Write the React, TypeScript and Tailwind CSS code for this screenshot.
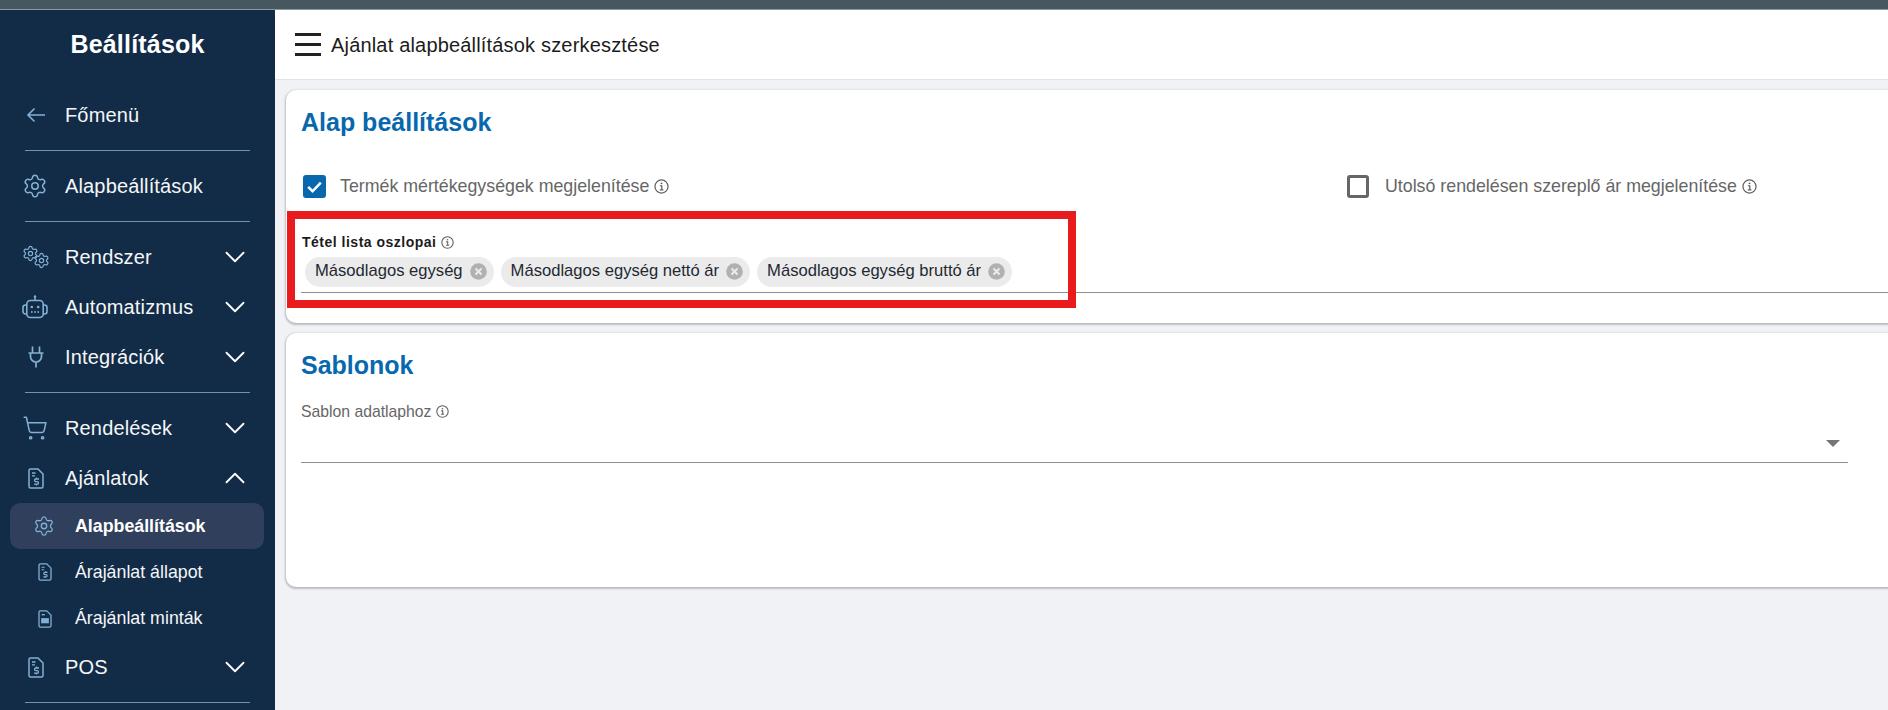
import { Settings, ShoppingCart, ChevronDown, ChevronUp } from 'lucide-react'
import type { ReactNode } from 'react'

function BackArrow() {
  return (
    <svg width={20} height={16} viewBox="0 0 20 16" fill="none" stroke="currentColor" strokeWidth="1.600">
      <path d="M19 8H2M8.500 1.500L2 8l6.500 6.500" />
    </svg>
  )
}

function QuoteIcon({ small }: { small?: boolean }) {
  return (
    <svg width={small ? 14 : 16} height={small ? 18 : 21} viewBox="0 0 16 21" fill="none" stroke="currentColor" strokeWidth="1.500">
      <path d="M2.500 1h7.500l5 5v12.500a1.500 1.500 0 0 1-1.500 1.500h-11A1.500 1.500 0 0 1 1 18.500V2.500A1.500 1.500 0 0 1 2.500 1z" />
      <path d="M4 5h3.500M4 7.800h3" strokeWidth="1.300" />
      <path d="M11 11h-3.200a1.200 1.200 0 0 0 0 2.600h1.400a1.200 1.200 0 0 1 0 2.600H6M8.500 9.600V11M8.500 16.200v1.400" strokeWidth="1.300" />
    </svg>
  )
}

function TemplateIcon() {
  return (
    <svg width={14} height={18} viewBox="0 0 16 21" fill="none" stroke="currentColor" strokeWidth="1.500">
      <path d="M2.500 1h7.500l5 5v12.500a1.500 1.500 0 0 1-1.500 1.500h-11A1.500 1.500 0 0 1 1 18.500V2.500A1.500 1.500 0 0 1 2.500 1z" />
      <path d="M4 5.500h4" strokeWidth="1.500" />
      <rect x="3.500" y="9.500" width="9" height="6" fill="currentColor" stroke="none" />
    </svg>
  )
}

function GearsIcon() {
  return (
    <span className="relative block h-[24px] w-[28px]">
      <Settings size={17} strokeWidth={1.700} className="absolute left-0 top-0" />
      <Settings size={17} strokeWidth={1.700} className="absolute bottom-0 right-0" />
    </span>
  )
}

function BotIcon() {
  return (
    <svg width={26} height={24} viewBox="0 0 26 24" fill="none" stroke="currentColor" strokeWidth="1.600">
      <path d="M13 1v4.500" />
      <circle cx="13" cy="1.500" r="1.200" fill="currentColor" stroke="none" />
      <rect x="4.800" y="5.500" width="16.400" height="17" rx="3.500" />
      <path d="M4.800 10H3.500A2.500 2.500 0 0 0 1 12.500v4A2.500 2.500 0 0 0 3.500 19h1.300M21.200 10h1.300a2.500 2.500 0 0 1 2.500 2.500v4a2.500 2.500 0 0 1-2.500 2.500h-1.300" />
      <circle cx="9.800" cy="12" r="1.300" fill="currentColor" stroke="none" />
      <circle cx="16.200" cy="12" r="1.300" fill="currentColor" stroke="none" />
      <circle cx="9.800" cy="17" r="0.900" fill="currentColor" stroke="none" />
      <circle cx="13" cy="17" r="0.900" fill="currentColor" stroke="none" />
      <circle cx="16.200" cy="17" r="0.900" fill="currentColor" stroke="none" />
    </svg>
  )
}

function PlugIcon() {
  return (
    <svg width={16} height={22} viewBox="0 0 16 22" fill="none" stroke="currentColor" strokeWidth="1.700">
      <path d="M4.500 0.500V7M11.500 0.500V7M0.500 7h15M2.500 7v3.500a5.500 5.500 0 0 0 11 0V7M8 16v5.500" />
    </svg>
  )
}

function InfoIcon({ size = 13 }: { size?: number }) {
  return (
    <svg width={size} height={size} viewBox="0 0 16 16" fill="none" stroke="#5f5f5f" className="shrink-0">
      <circle cx="8" cy="8" r="7" strokeWidth="1.300" />
      <path d="M6.300 7.200H8.300V11.500M6.200 11.500H10" strokeWidth="1.300" />
      <circle cx="8" cy="4.600" r="1" fill="#5f5f5f" stroke="none" />
    </svg>
  )
}

function Divider() {
  return <div className="mx-[25px] my-[10px] h-px bg-[#6f94b3]" />
}

function NavItem({ icon, label, open }: { icon: ReactNode; label: string; open?: boolean }) {
  return (
    <div className="flex h-[50px] items-center pl-[22px] pr-[23px] text-[20px] tracking-[0.15px] text-[#f4f6f8]">
      <span className="flex w-[43px] shrink-0 items-center text-[#82b1d4]">{icon}</span>
      <span className="flex-1">{label}</span>
      {open === undefined ? null : open ? (
        <ChevronUp size={34} strokeWidth={1.300} className="text-white" />
      ) : (
        <ChevronDown size={34} strokeWidth={1.300} className="text-white" />
      )}
    </div>
  )
}

function SubItem({ icon, label, active }: { icon: ReactNode; label: string; active?: boolean }) {
  return (
    <div
      className={
        active
          ? 'ml-[10px] mr-[11px] flex h-[46px] items-center rounded-[10px] bg-[#2f3f5c] pl-[23px] text-[17.800px] font-bold text-white'
          : 'ml-[10px] mr-[11px] flex h-[46.500px] items-center pl-[23px] text-[17.800px] text-[#f4f6f8]'
      }
    >
      <span className="flex w-[42px] shrink-0 items-center pl-[4px] text-[#82b1d4]">{icon}</span>
      {label}
    </div>
  )
}

function Chip({ label }: { label: string }) {
  return (
    <span className="flex h-[30px] items-center gap-[7px] rounded-full bg-[#ebebeb] pl-[10px] pr-[7px] text-[16.600px] text-[#1f2933]">
      {label}
      <svg width={17} height={17} viewBox="0 0 17 17">
        <circle cx="8.500" cy="8.500" r="8.300" fill="#b1b1b1" />
        <path d="M5.500 5.500l6 6M11.500 5.500l-6 6" stroke="#ebebeb" strokeWidth="2" />
      </svg>
    </span>
  )
}

function CheckRow({ checked, label }: { checked?: boolean; label: string }) {
  return (
    <div className="flex items-center">
      {checked ? (
        <span className="mr-[14px] flex h-[23px] w-[23px] items-center justify-center rounded-[3px] bg-[#0868ad]">
          <svg width={19} height={19} viewBox="0 0 24 24" fill="none" stroke="white" strokeWidth="3.200">
            <path d="M4 12.500l5.500 5.500L20 7" />
          </svg>
        </span>
      ) : (
        <span className="mr-[16px] h-[23px] w-[22px] rounded-[3px] border-[3px] border-[#666666]" />
      )}
      <span className="text-[17.800px] text-[#666666]">{label}</span>
      <span className="ml-[5px]">
        <InfoIcon size={15} />
      </span>
    </div>
  )
}

export default function App() {
  return (
    <div className="flex h-[710px] w-[1888px] flex-col overflow-hidden bg-[#f1f2f6] font-['Liberation_Sans',Arial,sans-serif]">
      <div className="h-[10px] shrink-0 border-b border-b-[#8a9aa3] bg-[#46575f]" />

      <div className="flex min-h-0 flex-1">
        <aside className="w-[275px] shrink-0 overflow-hidden bg-[#122b47]">
          <div className="flex h-[80px] items-center justify-center pb-[10px] text-[25px] tracking-[0.2px] font-bold text-white">
            Beállítások
          </div>
          <NavItem icon={<span className="pl-[4px]"><BackArrow /></span>} label="Főmenü" />
          <Divider />
          <NavItem icon={<Settings size={26} strokeWidth={1.400} />} label="Alapbeállítások" />
          <Divider />
          <NavItem icon={<GearsIcon />} label="Rendszer" open={false} />
          <NavItem icon={<BotIcon />} label="Automatizmus" open={false} />
          <NavItem icon={<span className="pl-[6px]"><PlugIcon /></span>} label="Integrációk" open={false} />
          <Divider />
          <NavItem icon={<ShoppingCart size={26} strokeWidth={1.400} />} label="Rendelések" open={false} />
          <NavItem icon={<span className="pl-[6px]"><QuoteIcon /></span>} label="Ajánlatok" open />
          <SubItem icon={<span className="-ml-[4px] block"><Settings size={22} strokeWidth={1.400} /></span>} label="Alapbeállítások" active />
          <SubItem icon={<span className="block pl-[1px]"><QuoteIcon small /></span>} label="Árajánlat állapot" />
          <SubItem icon={<span className="block pl-[1px]"><TemplateIcon /></span>} label="Árajánlat minták" />
          <NavItem icon={<span className="pl-[6px]"><QuoteIcon /></span>} label="POS" open={false} />
          <Divider />
        </aside>

        <main className="min-w-0 flex-1 overflow-hidden">
          <header className="flex h-[70px] items-center border-b border-b-[#e2e3e8] bg-white pl-[20px] pr-4">
            <div className="flex w-[36px] flex-col gap-[7px]">
              <span className="h-[3px] w-[26px] bg-[#222222]" />
              <span className="h-[3px] w-[26px] bg-[#222222]" />
              <span className="h-[3px] w-[26px] bg-[#222222]" />
            </div>
            <span className="text-[20px] tracking-[0.18px] text-[#1c1c1c]">Ajánlat alapbeállítások szerkesztése</span>
          </header>

          <div className="ml-[11px] mt-[10px] flex w-[1640px] flex-col gap-[10px]">
            <section className="relative h-[233px] rounded-[10px] bg-white pl-[15px] pt-[17px] shadow-[0_1px_2px_1px_rgba(0,0,0,0.22)]">
              <h2 className="text-[25px] leading-[30px] font-bold text-[#0868ad]">Alap beállítások</h2>
              <div className="mt-[36px] grid grid-cols-[1044px_1fr] pl-[2px]">
                <CheckRow checked label="Termék mértékegységek megjelenítése" />
                <CheckRow label="Utolsó rendelésen szereplő ár megjelenítése" />
              </div>
              <div className="mt-[32px] flex items-center gap-[5px] pl-[1px] text-[14px] tracking-[0.5px] font-bold text-[#1c1c1c]">
                Tétel lista oszlopai <InfoIcon />
              </div>
              <div className="mt-[4px] flex gap-[7px] border-b border-b-[#8f8f8f] pb-[5px] pl-[4px]">
                <Chip label="Másodlagos egység" />
                <Chip label="Másodlagos egység nettó ár" />
                <Chip label="Másodlagos egység bruttó ár" />
              </div>
              {/* red annotation frame from the screenshot */}
              <div className="absolute left-[1px] top-[121px] h-[97px] w-[789px] border-[8px] border-[#e81c1c]" />
            </section>

            <section className="h-[254px] rounded-[10px] bg-white pl-[15px] pt-[17px] shadow-[0_1px_2px_1px_rgba(0,0,0,0.22)]">
              <h2 className="text-[25px] leading-[30px] font-bold text-[#0868ad]">Sablonok</h2>
              <div className="mt-[20px] flex items-center gap-[5px] text-[15.750px] text-[#666666]">
                Sablon adatlaphoz <InfoIcon />
              </div>
              <div className="flex h-[39px] w-[1547px] items-center justify-end border-b border-b-[#8f8f8f] pr-[8px]">
                <span className="mt-[1px] h-0 w-0 border-x-[7px] border-t-[7px] border-x-transparent border-t-[#757575]" />
              </div>
            </section>
          </div>
        </main>
      </div>
    </div>
  )
}
